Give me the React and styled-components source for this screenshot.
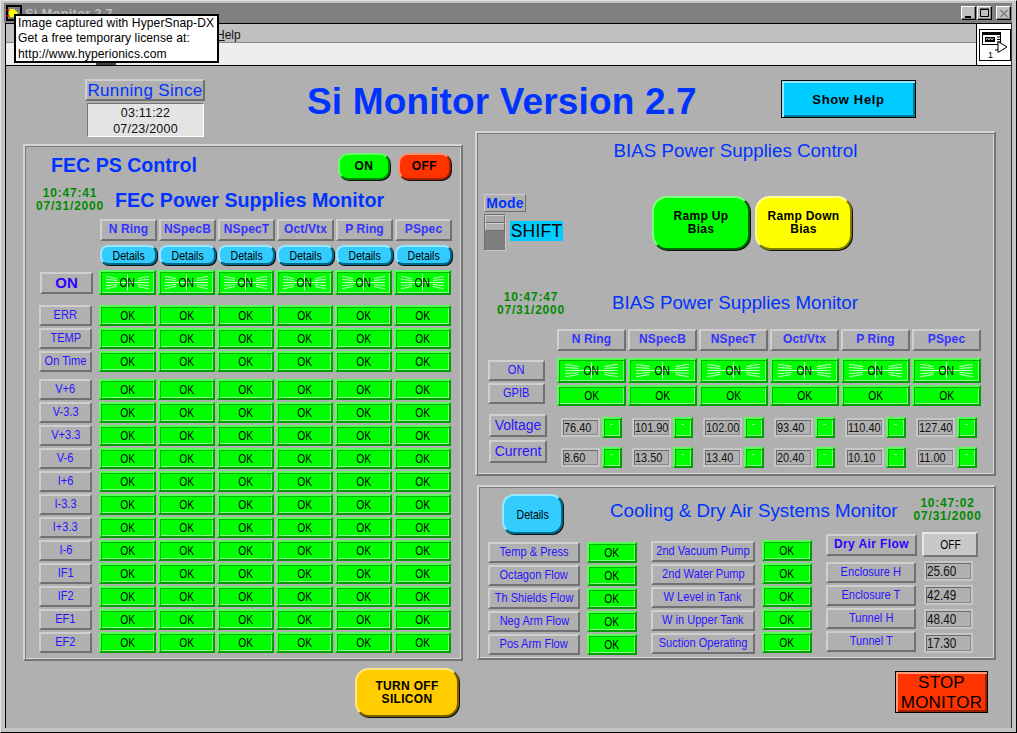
import React from 'react';
import styled, { createGlobalStyle } from 'styled-components';

const SANS = `"Liberation Sans", Arial, sans-serif`;

const Global = createGlobalStyle`
  html, body { margin: 0; padding: 0; background: #c0c0c0; }
  * { box-sizing: border-box; }
  body { font-family: ${SANS}; }
`;

const Win = styled.div`
  position: relative; width: 1017px; height: 733px; overflow: hidden;
  background: #c4c4c4; display: flex; flex-direction: column;
  border: 1px solid; border-color: #e4e4e4 #000 #000 #e4e4e4;
  padding: 2px 4px 4px 4px;
`;
const TitleBar = styled.div`
  height: 20px; flex: none; background: #808080; display: flex; align-items: center;
  padding: 0 1px 0 2px; margin: 0 0 0 -1px;
`;
const TitleIcon = styled.svg`width: 16px; height: 16px; flex: none;`;
const TitleText = styled.span`
  margin-left: 3px; font-size: 13px; font-weight: 700; color: #bdbdbd; flex: 1; letter-spacing: .2px;
`;
const WinBtn = styled.button`
  width: 15px; height: 14px; padding: 0; margin-left: ${p => p.$gap || 1}px; background: #c0c0c0;
  border: 1px solid; border-color: #fff #000 #000 #fff; box-shadow: inset -1px -1px 0 #808080;
  display: flex; align-items: center; justify-content: center;
`;
const Frame = styled.div`
  flex: 1; min-height: 0; display: flex; flex-direction: column; background: #b0b0b0;
  border-top: 1px solid #000; border-left: 1px solid #000; border-right: 1px solid #333;
`;
const TopBars = styled.div`display: flex; flex: none; border-bottom: 1px solid #000; height: 42px;`;
const BarsLeft = styled.div`flex: 1; display: flex; flex-direction: column;`;
const MenuBar = styled.div`
  height: 19px; background: #c0c0c0; border-bottom: 1px solid #8a8a8a; font-size: 12px; color: #111;
  padding: 4px 0 0 210px; line-height: 14px;
`;
const Under = styled.span`text-decoration: underline;`;
const ToolBar = styled.div`flex: 1; background: #eeeeee; position: relative;`;
const ToolStub = styled.span`
  position: absolute; left: 90px; bottom: 0; width: 20px; height: 2px; background: #444;
`;
const IconCell = styled.div`
  width: 35px; flex: none; background: #fff; border-left: 1px solid #000; padding: 5px 0 0 2px;
`;
const ViIcon = styled.svg`width: 32px; height: 32px; display: block;`;

const Canvas = styled.div`flex: 1; min-height: 0; padding-left: 17px; display: flex; flex-direction: column;`;
const Header = styled.div`height: 65px; flex: none; display: flex; align-items: flex-start; padding-top: 13px;`;
const RunningBlock = styled.div`margin-left: 62px; width: 120px; flex: none;`;
const RunningLabel = styled.div`
  height: 22px; font-size: 17px; line-height: 20px; letter-spacing: .35px; color: #0033ff; text-align: center;
  border: 2px solid; border-color: #cfcfcf #707070 #707070 #cfcfcf; white-space: nowrap;
`;
const RunningValue = styled.div`
  margin: 2px 0 0 2px; width: 117px; height: 34px; background: #e4e4e4; text-align: center;
  font-size: 12.5px; line-height: 15.5px; letter-spacing: .2px; color: #111; padding-top: 2px;
  border: 1px solid; border-color: #777 #fff #fff #777;
`;
const MainTitle = styled.h1`
  margin: 1px 0 0 102px; width: 389px; flex: none; font-size: 37px; line-height: 44px; font-weight: 700;
  color: #0033ff; white-space: nowrap; letter-spacing: .15px;
`;
const ShowHelp = styled.button`
  margin: 1px 0 0 85px; width: 135px; height: 38px; background: #00ccff; color: #000; padding: 0;
  border: 1px solid #000; font: 700 13px ${SANS}; letter-spacing: .65px;
  box-shadow: inset 2px 2px 0 #99e6ff, inset -2px -2px 0 #007a99;
`;
const Body = styled.div`display: flex; flex: none; gap: 12px;`;
const LeftCol = styled.div`width: 440px; flex: none; margin-top: 13px;`;
const RightCol = styled.div`width: 521px; flex: none; display: flex; flex-direction: column;`;
const Panel = styled.section`
  height: ${p => p.$h}px; margin-left: ${p => p.$ml || 0}px;
  border: 2px solid; border-color: #d6d6d6 #757575 #757575 #d6d6d6;
  box-shadow: inset 1px 1px 0 #7a7a7a, inset -1px -1px 0 #d6d6d6;
  display: flex; flex-direction: column;
`;
const CtlRow = styled.div`display: flex; align-items: center; height: 27px; margin-top: 7px; padding: 0 10px 0 26px;`;
const BlueHead = styled.h2`
  margin: ${p => p.$mt || 0}px 0 0 ${p => p.$ml || 0}px; font-size: ${p => p.$size || 18.75}px; font-weight: ${p => p.$bold ? 700 : 400}; color: #0033ff;
  white-space: nowrap; line-height: 24px;
`;
/* Condenses Arial-metric text to the narrow bitmap face of the original panel. */
const Squeeze = styled.span`
  display: inline-block; white-space: nowrap; transform: scaleX(${p => p.$x || .82});
  transform-origin: ${p => p.$origin || 'center'} center; position: relative;
`;
const RoundBtn = styled.button`
  display: flex; align-items: center; justify-content: center; text-align: center;
  width: ${p => p.$w}px; height: ${p => p.$h}px; background: ${p => p.$bg}; padding: 0; color: #000;
  margin-left: ${p => p.$ml || 0}px; margin-top: ${p => p.$mt || 0}px; flex: none;
  border: 2px solid; border-color: ${p => p.$lite} ${p => p.$dark} ${p => p.$dark} ${p => p.$lite};
  border-radius: ${p => p.$r || 10}px; box-shadow: 1px 1px 0 #111;
  font: ${p => p.$fw || 700} ${p => p.$fs || 12}px/13px ${SANS};
  letter-spacing: ${p => p.$ls ?? .3}px;
`;
const MonRow = styled.div`display: flex; align-items: center; height: 26px; margin-top: ${p => p.$mt || 6}px; padding-left: ${p => p.$pl}px;`;
const Stamp = styled.div`
  width: 70px; flex: none; text-align: center; color: #008a00; font-size: 12px; font-weight: 700; line-height: 13px;
  letter-spacing: .8px; white-space: nowrap; margin: ${p => p.$mt || 0}px 0 0 ${p => p.$ml || 0}px;
`;
const Grid = styled.div`
  display: grid; grid-template-columns: ${p => p.$label}px repeat(6, ${p => p.$pitch}px);
  height: ${p => p.$h}px; margin-top: ${p => p.$mt || 0}px; margin-left: ${p => p.$ml}px;
`;
const Raised = styled.div`
  display: flex; justify-content: center;
  width: ${p => p.$w || 53}px; height: ${p => p.$h || 21}px; margin-left: ${p => p.$ml || 0}px; margin-top: ${p => p.$mt || 0}px;
  border: 2px solid; border-color: #cfcfcf #707070 #707070 #cfcfcf; white-space: nowrap; flex: none;
  color: ${p => p.$c || '#2a14ff'}; font-size: ${p => p.$fs || 13.5}px; font-weight: ${p => p.$bold ? 700 : 400};
  line-height: ${p => (p.$h || 21) - 5}px; letter-spacing: ${p => p.$ls || 0}px;
`;
const Green = styled.div`
  position: relative; display: flex; justify-content: center;
  width: ${p => p.$w || 57}px; height: ${p => p.$h || 21}px; flex: none; margin-top: ${p => p.$mt || 0}px;
  background: #00ff00; color: #000; font-size: 13.5px;
  border: 2px solid; border-color: #55ff55 #00a000 #00a000 #55ff55;
  box-shadow: inset 1px 1px 0 #00b400, inset -1px -1px 0 #88ff88;
  line-height: ${p => (p.$h || 21) - 4}px;
`;
const Rays = styled.svg`position: absolute; inset: 0; width: 100%; height: 100%;`;
const RightTitle = styled.div`text-align: center; margin-top: 6px; height: 20px;`;
const RampRow = styled.div`display: flex; margin-top: 35px; padding-left: 7px; height: 57px; align-items: flex-start;`;
const ModeBlock = styled.div`width: 168px; flex: none;`;
const ModeLabel = styled.div`
  width: 42px; height: 18px; border: 1px solid; border-color: #cfcfcf #707070 #707070 #cfcfcf;
  color: #0033ff; font-size: 14px; font-weight: 700; line-height: 16px; text-align: center; letter-spacing: .2px;
`;
const ModeRow = styled.div`display: flex; margin-top: 2px; align-items: flex-start;`;
const Toggle = styled.div`
  width: 22px; height: 37px; border: 1px solid; border-color: #707070 #c8c8c8 #c8c8c8 #707070;
  background: #7e7e7e; display: flex; flex-direction: column;
`;
const ToggleCap = styled.div`
  height: 8px; background: ${p => p.$bg}; border: 1px solid; border-color: #d0d0d0 #707070 #707070 #d0d0d0;
`;
const Shift = styled.div`
  margin: 7px 0 0 4px; width: 53px; height: 20px; background: #00ccff; color: #000; font-size: 17.5px; line-height: 20px;
  letter-spacing: .2px; text-align: center;
`;
const Spacer = styled.div`height: ${p => p.$h}px; flex: none;`;
const Value = styled.div`
  width: ${p => p.$w || 39}px; height: ${p => p.$h || 19}px; margin-top: ${p => p.$mt || 0}px; margin-left: ${p => p.$ml || 0}px; flex: none;
  border: 2px solid #c6c6c6; box-shadow: inset 1px 1px 0 #6a6a6a, inset -1px -1px 0 #8a8a8a;
  font-size: ${p => p.$fs || 13.5}px; line-height: ${p => (p.$h || 19) - 4}px; padding-left: 1px; color: #111; white-space: nowrap;
`;
const ReadCell = styled.div`display: flex; padding-left: 4px; gap: 2px;`;
const Led = styled.div`
  position: relative; width: 20px; height: 21px; margin-top: ${p => p.$mt || 0}px; flex: none; background: #00ff00;
  border: 2px solid; border-color: #55ff55 #00a000 #00a000 #55ff55;
  box-shadow: inset 1px 1px 0 #00b400, inset -1px -1px 0 #88ff88;
  &::after { content: ""; position: absolute; left: 6px; top: 5px; width: 3px; height: 1px; background: #88ff88; }
`;
const CoolTop = styled.div`display: flex; height: 38px; margin-top: 7px; padding-left: 23px; align-items: flex-start;`;
const CoolCols = styled.div`display: flex; padding-left: 9px;`;
const CoolCol = styled.div`
  display: grid; grid-template-columns: ${p => p.$lw}px 50px; column-gap: 7px; row-gap: 2px; grid-auto-rows: 21px;
  margin-top: ${p => p.$mt}px; margin-left: ${p => p.$ml || 0}px; height: min-content;
`;
const Stack = styled.div`display: flex; flex-direction: column; margin-left: ${p => p.$ml || 0}px;`;
const OffBtn = styled.button`
  width: 56px; height: 25px; background: #c8c8c8; color: #000; padding: 0; flex: none;
  border: 2px solid; border-color: #e6e6e6 #777 #777 #e6e6e6; font: 13.5px ${SANS};
`;
const StopBtn = styled.button`
  margin: 11px 0 0 420px; width: 93px; height: 42px; background: #ff3300; color: #000; padding: 1px 0 0;
  border: 1px solid #000; box-shadow: inset 2px 2px 0 #ff9980, inset -2px -2px 0 #992000;
  font: 17px/20px ${SANS}; letter-spacing: .2px;
`;
const Tip = styled.div`
  position: absolute; left: 13px; top: 13px; width: 205px; height: 49px; background: #fff; color: #000;
  border: 2px solid #000; font-size: 12.1px; line-height: 15.3px; padding: 0 0 0 2px; white-space: nowrap; letter-spacing: .08px;
`;

const cols = ['N Ring', 'NSpecB', 'NSpecT', 'Oct/Vtx', 'P Ring', 'PSpec'];
const leftRows = [
  ['ERR', 10], ['TEMP', 2], ['On Time', 2], ['V+6', 7], ['V-3.3', 2], ['V+3.3', 2], ['V-6', 2], ['I+6', 2],
  ['I-3.3', 2], ['I+3.3', 2], ['I-6', 2], ['IF1', 2], ['IF2', 2], ['EF1', 2], ['EF2', 2],
];
const volts = ['76.40', '101.90', '102.00', '93.40', '110.40', '127.40'];
const amps = ['8.60', '13.50', '13.40', '20.40', '10.10', '11.00'];
const cool1 = ['Temp & Press', 'Octagon Flow', 'Th Shields Flow', 'Neg Arm Flow', 'Pos Arm Flow'];
const cool2 = ['2nd Vacuum Pump', '2nd Water Pump', 'W Level in Tank', 'W in Upper Tank', 'Suction Operating'];
const air = [['Enclosure H', '25.60'], ['Enclosure T', '42.49'], ['Tunnel H', '48.40'], ['Tunnel T', '17.30']];

const Label = ({ children, ...rest }) => <Raised {...rest}><Squeeze>{children}</Squeeze></Raised>;
const Ok = props => <Green {...props}><Squeeze $x={.76}>OK</Squeeze></Green>;
const Num = ({ children, ...rest }) => <Value {...rest}><Squeeze $x={.81} $origin="left">{children}</Squeeze></Value>;

const OnCell = ({ w }) => (
  <Green $w={w} $h={25}>
    <Rays viewBox="0 0 53 21" preserveAspectRatio="none">
      <g fill="none" stroke="#c4ffc4" strokeWidth="1">
        <path d="M5 4.500 C9 4.500 12 6 16 6.500" />
        <path d="M5 7.500 C9 7.500 12 8 16 8.500" />
        <path d="M5 10.500 H48" />
        <path d="M5 13.500 C9 13.500 12 13 16 12.500" />
        <path d="M5 16.500 C9 16.500 12 15 16 14.500" />
        <path d="M48 4.500 C44 4.500 41 6 37 6.500" />
        <path d="M48 7.500 C44 7.500 41 8 37 8.500" />
        <path d="M48 13.500 C44 13.500 41 13 37 12.500" />
        <path d="M48 16.500 C44 16.500 41 15 37 14.500" />
        <path d="M26.500 2 V19" />
      </g>
    </Rays>
    <Squeeze $x={.76}>ON</Squeeze>
  </Green>
);

export default function App() {
  return (
    <Win>
      <Global />
      <TitleBar>
        <TitleIcon viewBox="0 0 16 16">
          <rect width="16" height="16" fill="#000" />
          <rect x="2" y="2" width="12" height="12" fill="#808080" />
          <path d="M3 4h5l4 4-4 4H3z" fill="#ffff00" />
          <path d="M0 5h4M0 11h4" stroke="#f00" />
        </TitleIcon>
        <TitleText>Si Monitor 2.7</TitleText>
        <WinBtn aria-label="min"><svg width="9" height="9"><rect x="1" y="7" width="6" height="2" fill="#000" /></svg></WinBtn>
        <WinBtn aria-label="max"><svg width="11" height="10"><path d="M1.500 1.500h8v7h-8z M1 1h9" fill="none" stroke="#000" /></svg></WinBtn>
        <WinBtn $gap={4} aria-label="close"><svg width="10" height="9"><path d="M1.500 1l7 7M8.500 1l-7 7" stroke="#808080" strokeWidth="1.6" /></svg></WinBtn>
      </TitleBar>
      <Frame>
        <TopBars>
          <BarsLeft>
            <MenuBar><Under>H</Under>elp</MenuBar>
            <ToolBar><ToolStub /></ToolBar>
          </BarsLeft>
          <IconCell>
            <ViIcon viewBox="0 0 32 32">
              <rect x=".5" y=".5" width="31" height="31" fill="#fff" stroke="#000" />
              <rect x="3.500" y="3.500" width="18" height="12" fill="#fff" stroke="#000" />
              <path d="M4 4h17v2H4z" fill="#000" />
              <rect x="6" y="8" width="10" height="5" fill="#000" />
              <path d="M7 11l1.500-2 1.500 2 1.500-2 1.500 2 1.500-2" stroke="#fff" fill="none" strokeWidth=".8" />
              <path d="M18 8h3M18 10.500h3M18 13h3" stroke="#000" />
              <path d="M19 12.500v11l9-5.500z" fill="#fff" stroke="#000" />
              <path d="M16 15.500h3M16 21h3" stroke="#000" />
              <text x="9" y="29" fontSize="9" fontFamily="Liberation Sans, Arial, sans-serif" fill="#000">1</text>
            </ViIcon>
          </IconCell>
        </TopBars>
        <Canvas>
          <Header>
            <RunningBlock>
              <RunningLabel>Running Since</RunningLabel>
              <RunningValue>03:11:22<br />07/23/2000</RunningValue>
            </RunningBlock>
            <MainTitle>Si Monitor Version 2.7</MainTitle>
            <ShowHelp>Show Help</ShowHelp>
          </Header>
          <Body>
            <LeftCol>
              <Panel $h={517}>
                <CtlRow>
                  <BlueHead $size={19.6} $bold $mt={-4}>FEC PS Control</BlueHead>
                  <RoundBtn $w={52} $h={27} $bg="#00ff00" $lite="#66ff66" $dark="#008800" $ml={141} $ls={.5}>ON</RoundBtn>
                  <RoundBtn $w={53} $h={27} $bg="#ff3300" $lite="#ff9070" $dark="#a02000" $ml={8} $ls={.5}>OFF</RoundBtn>
                </CtlRow>
                <MonRow $pl={10}>
                  <Stamp $mt={1}>10:47:41<br />07/31/2000</Stamp>
                  <BlueHead $size={19.7} $bold $ml={10} $mt={1}>FEC Power Supplies Monitor</BlueHead>
                </MonRow>
                <Spacer $h={7} />
                <Grid $label={60} $pitch={59} $h={22} $ml={14}>
                  <span />
                  {cols.map(c => <Raised key={c} $w={57} $h={22} $ml={1} $bold $fs={12} $c="#3333ff" $ls={.15}>{c}</Raised>)}
                </Grid>
                <Grid $label={60} $pitch={59} $h={20} $mt={4} $ml={14}>
                  <span />
                  {cols.map(c => <RoundBtn key={c} $w={57} $h={20} $bg="#33ccff" $lite="#99e6ff" $dark="#006a8a" $r={8} $fw={400} $fs={13.5} $ls={0} $ml={1}><Squeeze $x={.78}>Details</Squeeze></RoundBtn>)}
                </Grid>
                <Grid $label={60} $pitch={59} $h={25} $mt={5} $ml={14}>
                  <Raised $w={53} $h={22} $mt={2} $ml={1} $fs={15} $bold $c="#3300ff">ON</Raised>
                  {cols.map(c => <OnCell key={c} />)}
                </Grid>
                {leftRows.map(([name, mt]) => (
                  <Grid key={name} $label={60} $pitch={59} $h={21} $mt={mt} $ml={14}>
                    <Label>{name}</Label>
                    {cols.map(c => <Ok key={c} />)}
                  </Grid>
                ))}
              </Panel>
              <RoundBtn $w={104} $h={49} $bg="#ffcc00" $lite="#ffe680" $dark="#7a6000" $r={14} $ml={332} $mt={7}><span>TURN OFF<br />SILICON</span></RoundBtn>
            </LeftCol>
            <RightCol>
              <Panel $h={345}>
                <RightTitle><BlueHead>BIAS Power Supplies Control</BlueHead></RightTitle>
                <RampRow>
                  <ModeBlock>
                    <ModeLabel>Mode</ModeLabel>
                    <ModeRow>
                      <Toggle><ToggleCap $bg="#a8a8a8" /><ToggleCap $bg="#b0b0b0" /></Toggle>
                      <Shift>SHIFT</Shift>
                    </ModeRow>
                  </ModeBlock>
                  <RoundBtn $w={98} $h={54} $bg="#00ff00" $lite="#80ff80" $dark="#006600" $r={15} $mt={2}><span>Ramp Up<br />Bias</span></RoundBtn>
                  <RoundBtn $w={97} $h={54} $bg="#ffff00" $lite="#ffff99" $dark="#808000" $r={15} $mt={2} $ml={5}><span>Ramp Down<br />Bias</span></RoundBtn>
                </RampRow>
                <MonRow $mt={40} $pl={19}>
                  <Stamp>10:47:47<br />07/31/2000</Stamp>
                  <BlueHead $ml={46} $mt={-3}>BIAS Power Supplies Monitor</BlueHead>
                </MonRow>
                <Spacer $h={12} />
                <Grid $label={69} $pitch={71} $h={22} $ml={11}>
                  <span />
                  {cols.map(c => <Raised key={c} $w={69} $h={22} $bold $fs={12} $c="#3333ff" $ls={.15}>{c}</Raised>)}
                </Grid>
                <Grid $label={69} $pitch={71} $h={25} $mt={7} $ml={11}>
                  <Label $w={57} $mt={2}>ON</Label>
                  {cols.map(c => <OnCell key={c} w={69} />)}
                </Grid>
                <Grid $label={69} $pitch={71} $h={21} $mt={2} $ml={11}>
                  <Label $w={57} $mt={-2}>GPIB</Label>
                  {cols.map(c => <Ok key={c} $w={69} />)}
                </Grid>
                <Grid $label={69} $pitch={71} $h={23} $mt={8} $ml={11}>
                  <Raised $w={58} $h={23} $ml={1} $fs={14}>Voltage</Raised>
                  {volts.map(v => <ReadCell key={v}><Num $mt={4}>{v}</Num><Led $mt={3} /></ReadCell>)}
                </Grid>
                <Grid $label={69} $pitch={71} $h={28} $mt={3} $ml={11}>
                  <Raised $w={58} $h={23} $ml={1} $fs={14}>Current</Raised>
                  {amps.map(v => <ReadCell key={v}><Num $mt={8}>{v}</Num><Led $mt={7} /></ReadCell>)}
                </Grid>
              </Panel>
              <Spacer $h={9} />
              <Panel $h={175} $ml={2}>
                <CoolTop>
                  <RoundBtn $w={61} $h={40} $bg="#33ccff" $lite="#99e6ff" $dark="#006a8a" $r={12} $fw={400} $fs={13.5} $ls={0}><Squeeze $x={.78}>Details</Squeeze></RoundBtn>
                  <BlueHead $ml={47} $mt={5}>{'Cooling & Dry Air Systems Monitor'}</BlueHead>
                  <Stamp $ml={15} $mt={3}>10:47:02<br />07/31/2000</Stamp>
                </CoolTop>
                <CoolCols>
                  <CoolCol $lw={92} $mt={10}>
                    {cool1.map(t => (
                      <React.Fragment key={t}><Label $w={92}>{t}</Label><Ok $w={50} /></React.Fragment>
                    ))}
                  </CoolCol>
                  <CoolCol $lw={104} $mt={9} $ml={14}>
                    {cool2.map(t => (
                      <React.Fragment key={t}><Label $w={104}>{t}</Label><Ok $w={50} $mt={-1} /></React.Fragment>
                    ))}
                  </CoolCol>
                  <Stack $ml={14}>
                    <Raised $w={91} $h={22} $mt={2} $bold $fs={12} $c="#3300ff" $ls={.4}>Dry Air Flow</Raised>
                    {air.map(([t], i) => <Label key={t} $w={90} $mt={i ? 2 : 6}>{t}</Label>)}
                  </Stack>
                  <Stack $ml={5}>
                    <OffBtn><Squeeze $x={.76}>OFF</Squeeze></OffBtn>
                    {air.map(([t, v]) => <Num key={t} $w={49} $h={20} $ml={2} $mt={4} $fs={14.5}>{v}</Num>)}
                  </Stack>
                </CoolCols>
              </Panel>
              <StopBtn>STOP<br />MONITOR</StopBtn>
            </RightCol>
          </Body>
        </Canvas>
      </Frame>
      <Tip>Image captured with HyperSnap-DX<br />Get a free temporary license at:<br />http://www.hyperionics.com</Tip>
    </Win>
  );
}
